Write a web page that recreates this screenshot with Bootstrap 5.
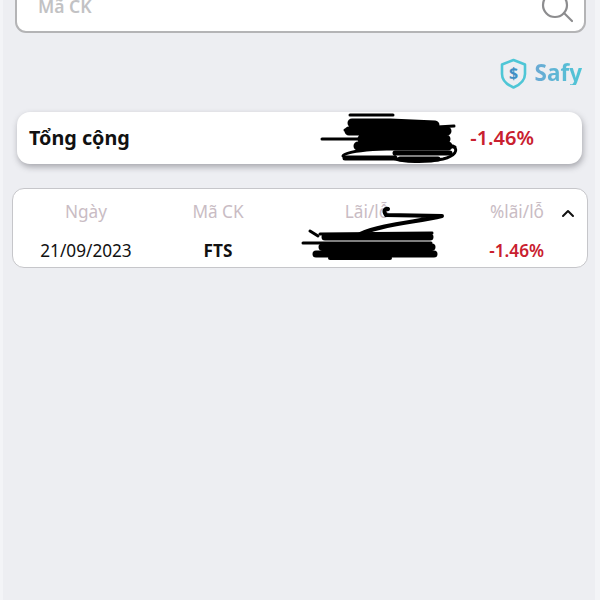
<!DOCTYPE html>
<html lang="vi">
<head>
    <meta charset="UTF-8">
    <meta name="viewport" content="width=device-width, initial-scale=1.0">
    <title>Safy</title>
    <link href="https://cdn.jsdelivr.net/npm/bootstrap@5.3.0/dist/css/bootstrap.min.css" rel="stylesheet">
    <style>
        html, body { height: 100%; overflow: hidden; }
        body { background: #f3f4f7; font-family: "Noto Sans", "Open Sans", sans-serif; color: #111; }
        .screen { height: 600px; margin: 0 5px 0 3px; background: #edeef2; }
        .search-box { height: 57px; margin: -24px 9px 0 12px; padding: 0 11px 0 21px; background: #fff; border: 2px solid #b4b4b6; border-radius: 11px; }
        .search-box span { margin-top: 3px; color: #c2c2c4; font-size: 17.500px; font-weight: 600; }
        .search-icon { margin-top: 7px; }
        .safy-row { height: 79px; padding: 2px 13px 0 0; }
        .safy-name { font-size: 22.500px; font-weight: 700; line-height: 1; background: linear-gradient(90deg, #6aa9d4, #4fc6d6); -webkit-background-clip: text; background-clip: text; color: transparent; }
        .total-card { height: 52px; margin: 0 13px 24px 14px; padding: 0 48px 0 12px; background: #fff; border-radius: 13px; box-shadow: 1px 3px 6px rgba(60, 60, 70, .4); }
        .total-label { font-size: 19.800px; font-weight: 700; }
        .total-pct { font-size: 20px; font-weight: 600; color: #c9202f; }
        .trade-card { height: 80px; margin: 0 7px 0 9px; background: #fff; border: 1px solid #c6c6ca; border-radius: 12px; }
        .trade-row { display: grid; grid-template-columns: 146px 118px 180px 87px; height: 39px; align-items: center; text-align: center; font-size: 17.200px; }
        .trade-row > :nth-child(4) { text-align: right; }
        .trade-head { margin-top: 3px; color: #c9bcc4; }
        .trade-pct { font-weight: 600; color: #c9202f; }
        .scribble { position: absolute; pointer-events: none; }
        .scribble-total { left: 303px; top: 0; }
        .scribble-trade { left: 287px; top: 7px; }
        .chevron { position: absolute; left: 548px; top: 20px; }
    </style>
</head>
<body>
    <div class="screen overflow-hidden">
        <div class="search-box d-flex align-items-center justify-content-between">
            <span>Mã CK</span>
            <svg class="search-icon" width="32" height="32" viewBox="0 0 32 32" fill="none" stroke="#8c8c8e" stroke-width="2.200" stroke-linecap="round">
                <circle cx="14" cy="13" r="12"/>
                <path d="M23 21l8 8"/>
            </svg>
        </div>

        <div class="safy-row d-flex align-items-center justify-content-end gap-2">
            <svg width="27" height="31" viewBox="0 0 27 31" fill="none">
                <path d="M13.500 2 25 6.500V16c0 6-4.500 10.500-11.500 13.500C6.500 26.500 2 22 2 16V6.500z" stroke="#4fc6d6" stroke-width="2.600" stroke-linejoin="round"/>
                <text x="13.500" y="21" text-anchor="middle" font-size="16" font-weight="700" font-family="Noto Sans, sans-serif" fill="#3f8fc4">$</text>
            </svg>
            <span class="safy-name">Safy</span>
        </div>

        <div class="total-card position-relative d-flex align-items-center justify-content-between">
            <span class="total-label">Tổng cộng</span>
            <span class="total-pct">-1.46%</span>
            <svg class="scribble scribble-total" width="140" height="52" viewBox="320 112 140 52" fill="none" stroke="#000" stroke-linecap="round" stroke-linejoin="round">
                <path stroke-width="3" d="M350 115h43M322 139h110M345 130h30M420 128l34-2M438 146l17 1"/>
                <path stroke-width="9" d="M352 123h38l45 2M349 131h98M362 139h84M358 146h90"/>
                <path stroke-width="3" d="M343 156c3-6 40-8 110-10 6 4 2 10-10 13-18 4-40 3-50-1"/>
                <path stroke-width="5" d="M345 158h50M395 153h55M400 159h38"/>
            </svg>
        </div>

        <div class="trade-card position-relative">
            <div class="trade-row trade-head">
                <span>Ngày</span>
                <span>Mã CK</span>
                <span>Lãi/lỗ</span>
                <span>%lãi/lỗ</span>
            </div>
            <div class="trade-row">
                <span>21/09/2023</span>
                <strong>FTS</strong>
                <span></span>
                <span class="trade-pct">-1.46%</span>
            </div>
            <svg class="chevron" width="14" height="9" viewBox="0 0 14 9" fill="none" stroke="#111" stroke-width="2" stroke-linecap="round" stroke-linejoin="round">
                <path d="M2 7l5-5 5 5"/>
            </svg>
            <svg class="scribble scribble-trade" width="145" height="70" viewBox="300 196 145 70" fill="none" stroke="#000" stroke-linecap="round" stroke-linejoin="round">
                <path stroke-width="4" d="M386 215c-3-4-1-7 2-6M386 215l56 1c-25 6-60 8-82 18"/>
                <path stroke-width="3" d="M310 231l8 5M303 243h128M320 234l112-1"/>
                <path stroke-width="7" d="M325 237h105M322 247h110M316 254h118"/>
                <path stroke-width="4" d="M330 258h60"/>
            </svg>
        </div>
    </div>
</body>
</html>
